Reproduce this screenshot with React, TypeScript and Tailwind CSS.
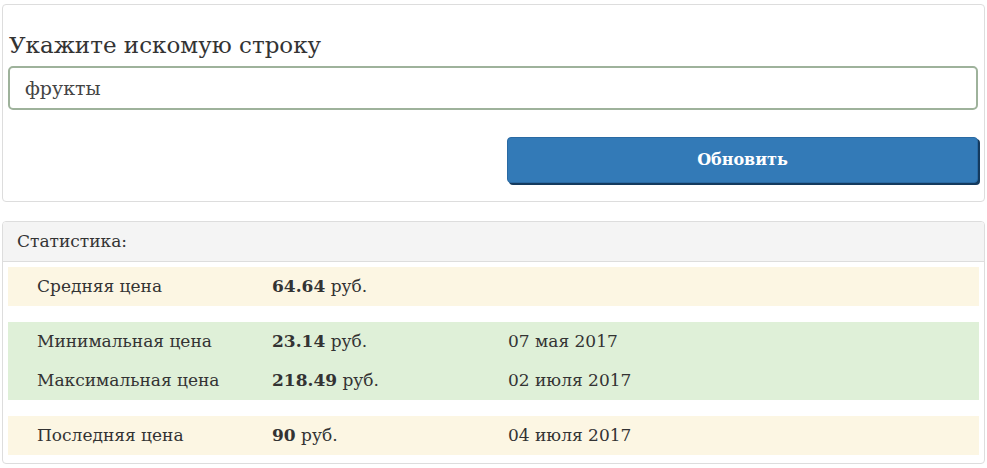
const rows = [
  { group: 'warn', items: [{ label: 'Средняя цена', value: '64.64', date: '' }] },
  {
    group: 'ok',
    items: [
      { label: 'Минимальная цена', value: '23.14', date: '07 мая 2017' },
      { label: 'Максимальная цена', value: '218.49', date: '02 июля 2017' },
    ],
  },
  { group: 'warn', items: [{ label: 'Последняя цена', value: '90', date: '04 июля 2017' }] },
];

export default function App() {
  return (
    <div className="min-h-[468px] bg-white pt-1 px-[2px] font-['DejaVu_Serif',serif] text-[#333]">
      {/* Search panel */}
      <div className="w-[983px] h-[198px] rounded-[4px] border border-[#dddddd] px-[5px] pt-[24px]">
        <label className="block text-[23px] leading-[32px] text-[#333] pl-[1px]">Укажите искомую строку</label>
        <input
          readOnly
          value="фрукты"
          className="mt-[5px] w-[970px] h-[44px] rounded-[5px] border-2 border-[#9eb29b] px-[15px] text-[19px] text-[#444] outline-none font-['DejaVu_Serif',serif]"
        />
        <div className="flex justify-end mt-[27px] pr-[1px]">
          <button className="w-[471px] h-[46px] rounded-[4px] bg-[#337ab7] border border-[#2a6aa3] shadow-[2px_2px_0_#143a5e] text-white text-[16px] font-bold">
            Обновить
          </button>
        </div>
      </div>

      {/* Stats panel */}
      <div className="mt-[19px] w-[983px] h-[243px] rounded-[4px] border border-[#dddddd] overflow-hidden">
        <div className="h-[40px] bg-[#f4f4f4] border-b border-[#dddddd] px-[14px] flex items-center text-[17px] text-[#333]">
          Статистика:
        </div>
        <div className="px-[5px] pt-[5px] flex flex-col gap-[16px]">
          {rows.map((g, i) => (
            <div key={i} className={`${g.group === 'ok' ? 'bg-[#dff0d8]' : 'bg-[#fcf6e3]'}`}>
              {g.items.map((r) => (
                <div key={r.label} className="flex items-center h-[39px] text-[17px] text-[#333]">
                  <div className="w-[264px] pl-[29px]">{r.label}</div>
                  <div className="w-[236px]">
                    <b className="font-bold">{r.value}</b> руб.
                  </div>
                  <div>{r.date}</div>
                </div>
              ))}
            </div>
          ))}
        </div>
      </div>
    </div>
  );
}
